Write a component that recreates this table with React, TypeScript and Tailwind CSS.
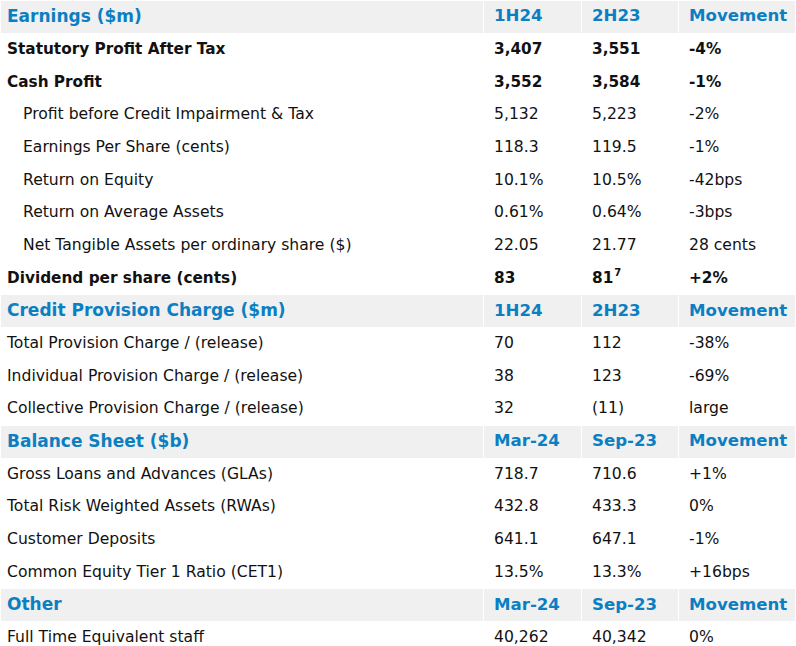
import type React from "react"

type Row =
  | { kind: "head"; label: string; cols: [string, string, string] }
  | { kind: "bold" | "sub" | "plain"; label: string; cols: [React.ReactNode, React.ReactNode, React.ReactNode] }

const rows: Row[] = [
  { kind: "head", label: "Earnings ($m)", cols: ["1H24", "2H23", "Movement"] },
  { kind: "bold", label: "Statutory Profit After Tax", cols: ["3,407", "3,551", "-4%"] },
  { kind: "bold", label: "Cash Profit", cols: ["3,552", "3,584", "-1%"] },
  { kind: "sub", label: "Profit before Credit Impairment & Tax", cols: ["5,132", "5,223", "-2%"] },
  { kind: "sub", label: "Earnings Per Share (cents)", cols: ["118.3", "119.5", "-1%"] },
  { kind: "sub", label: "Return on Equity", cols: ["10.1%", "10.5%", "-42bps"] },
  { kind: "sub", label: "Return on Average Assets", cols: ["0.61%", "0.64%", "-3bps"] },
  { kind: "sub", label: "Net Tangible Assets per ordinary share ($)", cols: ["22.05", "21.77", "28 cents"] },
  {
    kind: "bold",
    label: "Dividend per share (cents)",
    cols: [
      "83",
      <>
        81<sup className="relative -top-[1px] ml-[1px] text-[10px] align-super">7</sup>
      </>,
      "+2%",
    ],
  },
  { kind: "head", label: "Credit Provision Charge ($m)", cols: ["1H24", "2H23", "Movement"] },
  { kind: "plain", label: "Total Provision Charge / (release)", cols: ["70", "112", "-38%"] },
  { kind: "plain", label: "Individual Provision Charge / (release)", cols: ["38", "123", "-69%"] },
  { kind: "plain", label: "Collective Provision Charge / (release)", cols: ["32", "(11)", "large"] },
  { kind: "head", label: "Balance Sheet ($b)", cols: ["Mar-24", "Sep-23", "Movement"] },
  { kind: "plain", label: "Gross Loans and Advances (GLAs)", cols: ["718.7", "710.6", "+1%"] },
  { kind: "plain", label: "Total Risk Weighted Assets (RWAs)", cols: ["432.8", "433.3", "0%"] },
  { kind: "plain", label: "Customer Deposits", cols: ["641.1", "647.1", "-1%"] },
  { kind: "plain", label: "Common Equity Tier 1 Ratio (CET1)", cols: ["13.5%", "13.3%", "+16bps"] },
  { kind: "head", label: "Other", cols: ["Mar-24", "Sep-23", "Movement"] },
  { kind: "plain", label: "Full Time Equivalent staff", cols: ["40,262", "40,342", "0%"] },
]

export default function App() {
  return (
    <div
      className="w-[796px] h-[646px] overflow-hidden bg-white text-[#111]"
      style={{ fontFamily: 'Verdana, "DejaVu Sans", sans-serif' }}
    >
      <div className="grid grid-cols-[482px_97px_96px_116px] gap-px p-px">
        {rows.map((row, i) => {
          if (row.kind === "head") {
            return [
              <div key={`${i}-l`} className="h-[31.7px] flex items-center pl-[6px] bg-[#f0f0f0] text-[#0b7fc2] text-[17px] font-bold whitespace-nowrap">
                {row.label}
              </div>,
              ...row.cols.map((c, j) => (
                <div key={`${i}-${j}`} className="h-[31.7px] flex items-center pl-[10px] bg-[#f0f0f0] text-[#0b7fc2] text-[16.6px] font-bold whitespace-nowrap">
                  {c}
                </div>
              )),
            ]
          }
          const font = row.kind === "bold" ? "font-bold text-[15.3px]" : "font-normal text-[15.6px]"
          const pad = row.kind === "sub" ? "pl-[22px]" : "pl-[6px]"
          return [
            <div key={`${i}-l`} className={`h-[31.7px] flex items-center ${pad} ${font} whitespace-nowrap`}>
              {row.label}
            </div>,
            ...row.cols.map((c, j) => (
              <div key={`${i}-${j}`} className={`h-[31.7px] flex items-center pl-[10px] ${font} whitespace-nowrap`}>
                <span>{c}</span>
              </div>
            )),
          ]
        })}
      </div>
    </div>
  )
}
